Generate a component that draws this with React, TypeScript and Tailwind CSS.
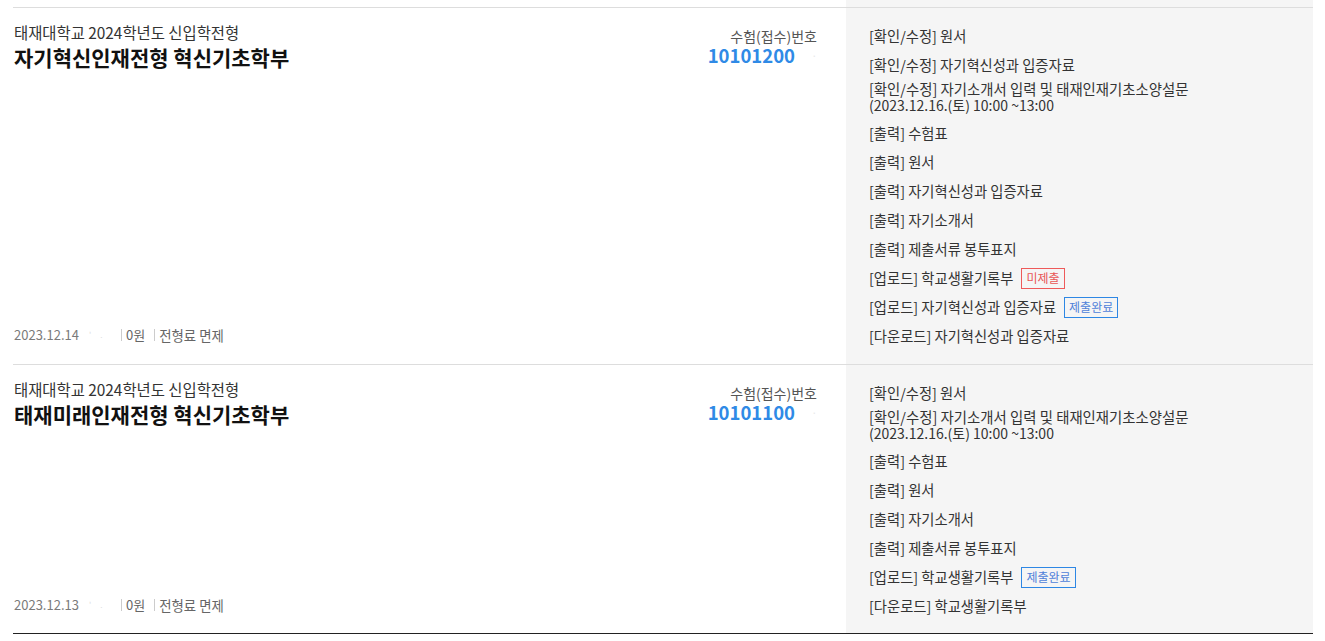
const font = "font-['Noto_Sans_CJK_KR','Noto_Sans',sans-serif]";

type Action = {
  text: string;
  sub?: string;
  badge?: 'none' | 'done';
};

type Application = {
  school: string;
  title: string;
  number: string;
  date: string;
  actions: Action[];
};

const apps: Application[] = [
  {
    school: '태재대학교 2024학년도 신입학전형',
    title: '자기혁신인재전형 혁신기초학부',
    number: '10101200',
    date: '2023.12.14',
    actions: [
      { text: '[확인/수정] 원서' },
      { text: '[확인/수정] 자기혁신성과 입증자료' },
      { text: '[확인/수정] 자기소개서 입력 및 태재인재기초소양설문', sub: '(2023.12.16.(토) 10:00 ~13:00' },
      { text: '[출력] 수험표' },
      { text: '[출력] 원서' },
      { text: '[출력] 자기혁신성과 입증자료' },
      { text: '[출력] 자기소개서' },
      { text: '[출력] 제출서류 봉투표지' },
      { text: '[업로드] 학교생활기록부', badge: 'none' },
      { text: '[업로드] 자기혁신성과 입증자료', badge: 'done' },
      { text: '[다운로드] 자기혁신성과 입증자료' },
    ],
  },
  {
    school: '태재대학교 2024학년도 신입학전형',
    title: '태재미래인재전형 혁신기초학부',
    number: '10101100',
    date: '2023.12.13',
    actions: [
      { text: '[확인/수정] 원서' },
      { text: '[확인/수정] 자기소개서 입력 및 태재인재기초소양설문', sub: '(2023.12.16.(토) 10:00 ~13:00' },
      { text: '[출력] 수험표' },
      { text: '[출력] 원서' },
      { text: '[출력] 자기소개서' },
      { text: '[출력] 제출서류 봉투표지' },
      { text: '[업로드] 학교생활기록부', badge: 'done' },
      { text: '[다운로드] 학교생활기록부' },
    ],
  },
];

function Badge({ kind }: { kind: 'none' | 'done' }) {
  if (kind === 'none') {
    return (
      <span className="ml-[8px] inline-flex h-[21px] items-center border border-[#ee5a5a] px-[4px] text-[12px] leading-none text-[#e85555]">
        미제출
      </span>
    );
  }
  return (
    <span className="ml-[8px] inline-flex h-[21px] items-center border border-[#2e87e4] px-[4px] text-[12px] leading-none text-[#4f7fd9]">
      제출완료
    </span>
  );
}

function ActionList({ actions, last }: { actions: Action[]; last?: boolean }) {
  return (
    <ul className={`pt-[18px] pl-[23px] ${last ? 'pb-[17px]' : 'pb-[18px]'}`}>
      {actions.map((a, i) =>
        a.sub ? (
          <li key={i} className="mt-[5px] text-[14.4px] leading-[17px] text-[#333]">
            <div>{a.text}</div>
            <div className="text-[14px]">{a.sub}</div>
          </li>
        ) : (
          <li
            key={i}
            className={`flex h-[20px] items-center text-[14.3px] leading-[20px] text-[#333] ${i === 0 ? '' : 'mt-[9px]'}`}
          >
            <span>{a.text}</span>
            {a.badge && <Badge kind={a.badge} />}
          </li>
        ),
      )}
    </ul>
  );
}

function AppRow({ app, last }: { app: Application; last?: boolean }) {
  return (
    <div className={`flex ${last ? 'border-b border-[#222]' : 'border-b border-[#ddd]'}`}>
      <div className={`flex flex-1 flex-col justify-between pt-[14px] pl-px pr-[29px] ${last ? 'pb-[18px]' : 'pb-[19px]'}`}>
        <div className="flex items-start justify-between">
          <div>
            <p className="text-[15.4px] leading-[20px] text-[#333]">{app.school}</p>
            <h2 className="mt-[2px] text-[21px] font-bold leading-[26px] text-[#111]">{app.title}</h2>
          </div>
          <div className="pt-[4px] text-right">
            <p className="text-[14px] leading-[20px] text-[#555]">수험(접수)번호</p>
            <p className="flex items-center justify-end leading-[19px]">
              <span className="text-[18.5px] font-bold text-[#2f8ae6]">{app.number}</span>
              <span className="w-[22px] text-[10px] text-[#e8e8e8]">·</span>
            </p>
          </div>
        </div>
        <div className="flex items-center text-[13px] leading-[20px]">
          <span className="flex w-[107px] items-center text-[#7a7a7a]">
            {app.date}
            <span className="ml-[10px] text-[8px] text-[#ddd]">'</span>
            <span className="ml-[9px] text-[8px] text-[#ddd]">.</span>
          </span>
          <span className="border-l border-[#ccc] pl-[4px] leading-[12px] text-[#666]">0원</span>
          <span className="ml-[9px] border-l border-[#ccc] pl-[4px] text-[13.4px] leading-[12px] text-[#666]">전형료 면제</span>
        </div>
      </div>
      <div className="w-[467px] shrink-0 bg-[#f5f5f5]">
        <ActionList actions={app.actions} last={last} />
      </div>
    </div>
  );
}

export default function App() {
  return (
    <div className={`min-h-screen bg-white ${font}`}>
      <div className="ml-[13px] w-[1300px]">
        {/* tail of the previous row */}
        <div className="flex h-[8px] border-b border-[#ddd]">
          <div className="flex-1" />
          <div className="w-[467px] bg-[#f5f5f5]" />
        </div>
        {apps.map((app, i) => (
          <AppRow key={app.number} app={app} last={i === apps.length - 1} />
        ))}
      </div>
    </div>
  );
}
